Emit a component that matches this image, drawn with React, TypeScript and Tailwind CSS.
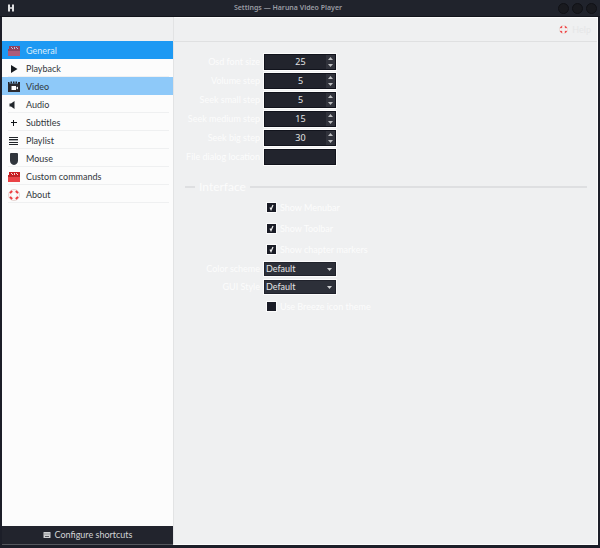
import { useState } from "react";
import type { ReactNode } from "react";

function ToolboxIcon() {
  return (
    <svg className="h-3 w-3" viewBox="0 0 12 12" shapeRendering="crispEdges">
      <path d="M1 1h11v5H0V4h1z" fill="#c91c20" />
      <path d="M0 5h12v6H0z" fill="#ea4346" />
      <path d="M0 5h12v1H0z" fill="#b5282c" />
      <path d="M3 2h1v1H3zM4 3h1v1H4zM6 2h1v2H6zM8 2h1v1H8zM9 3h1v1H9z" fill="#f4d9d9" />
    </svg>
  );
}

function LifebuoyMark() {
  return (
    <g>
      <circle cx="6" cy="6" r="4.300" fill="none" stroke="#fdf8f7" strokeWidth="2.600" />
      <circle cx="6" cy="6" r="5.500" fill="none" stroke="#dfc9c5" strokeWidth="0.800" />
      <circle cx="6" cy="6" r="2.900" fill="none" stroke="#e9d9d6" strokeWidth="0.500" />
      <path
        d="M1.300 3.400 3.400 1.300 4.800 2.400 3.800 3.800 2.400 4.800zM8.600 1.300 10.700 3.400 9.600 4.800 8.200 3.800 7.200 2.400zM1.300 8.600 2.400 7.200 3.800 8.200 4.800 9.600 3.400 10.700zM10.700 8.600 8.600 10.700 7.200 9.600 8.200 8.200 9.600 7.200z"
        fill="#ec3b3e"
      />
    </g>
  );
}

function HelpIcon() {
  return (
    <svg className="h-3 w-3" viewBox="0 0 12 12">
      <LifebuoyMark />
    </svg>
  );
}

function PlayIcon() {
  return (
    <svg className="h-3 w-3" viewBox="0 0 12 12">
      <path d="M3 2v8L9.500 6z" fill="#15191e" />
    </svg>
  );
}

function VideoIcon() {
  return (
    <svg className="h-3 w-3" viewBox="0 0 12 12">
      <path d="M0 2.500h12V11H0z" fill="#2b2b30" />
      <path d="M0 1h1.500v2H0zM2.500 0.500H4v2H2.500zM5 0.500h1.500v2H5zM7.500 0.500H9v2H7.500zM10 1h2v2h-2z" fill="#232329" />
      <path d="M3.500 5H8v4H3.500zM8 7l2-1.500v3z" fill="#fff" />
    </svg>
  );
}

function AudioIcon() {
  return (
    <svg className="h-3 w-3" viewBox="0 0 12 12">
      <path d="M1.500 4.500H3L6.500 2v8L3 7.500H1.500z" fill="#20252b" />
    </svg>
  );
}

function PlusIcon() {
  return (
    <svg className="h-3 w-3" viewBox="0 0 12 12" shapeRendering="crispEdges">
      <path d="M5 3h1v2h3v1H6v3H5V6H3V5h2z" fill="#101318" />
    </svg>
  );
}

function ListIcon() {
  return (
    <svg className="h-3 w-3" viewBox="0 0 12 12" shapeRendering="crispEdges">
      <path d="M1 2h9v1H1zM1 4h9v1H1zM1 7h9v1H1zM1 9h9v1H1z" fill="#22262b" />
      <path d="M1 5h9v1H1z" fill="#a5a7aa" />
    </svg>
  );
}

function MouseIcon() {
  return (
    <svg className="h-3 w-3" viewBox="0 0 12 12">
      <path d="M2.500 0h7L10 1v6.500C10 10 8.500 11.500 6 12 3.500 11.500 2 10 2 7.500V1z" fill="#30353c" />
    </svg>
  );
}

function KeyboardIcon() {
  return (
    <svg className="h-2 w-2" viewBox="0 0 8 8">
      <rect x="0.500" y="1" width="7" height="6" rx="0.500" fill="#cfd0d2" />
      <path d="M1.500 2.500h1v1h-1zM3.500 2.500h1v1h-1zM5.500 2.500h1v1h-1zM2 5h4v1H2z" fill="#55575d" />
    </svg>
  );
}

const pages: { name: string; icon: ReactNode }[] = [
  { name: "General", icon: <ToolboxIcon /> },
  { name: "Playback", icon: <PlayIcon /> },
  { name: "Video", icon: <VideoIcon /> },
  { name: "Audio", icon: <AudioIcon /> },
  { name: "Subtitles", icon: <PlusIcon /> },
  { name: "Playlist", icon: <ListIcon /> },
  { name: "Mouse", icon: <MouseIcon /> },
  { name: "Custom commands", icon: <ToolboxIcon /> },
  { name: "About", icon: <HelpIcon /> },
];

function rowStyle(index: number) {
  if (index === 0) return "bg-[#1d99f3] text-[#d9ecfb]";
  if (index === 2) return "bg-[#8ec9f9] text-[#31363b]";
  return "bg-[#fcfcfc] text-[#31363b]";
}

function Sidebar() {
  return (
    <aside className="flex w-[171px] shrink-0 flex-col bg-[#fcfcfc]">
      <div className="h-6 bg-[#eff0f1]" />
      <nav className="flex-1">
        {pages.map((page, index) => (
          <button key={page.name} type="button" className={"flex h-[18px] w-full pl-1.5 pr-1 text-left " + rowStyle(index)}>
            <span
              className={
                "flex h-full flex-1 items-center gap-1.5 border-b pt-0.5 " +
                (index === 0 || index === 2 ? "border-transparent" : "border-[#eff0f1]")
              }
            >
              <span className={index === 0 ? "opacity-70" : ""}>{page.icon}</span>
              {page.name}
            </span>
          </button>
        ))}
      </nav>
      <button
        type="button"
        className="flex h-[19px] items-center justify-center gap-1 border-b border-[#55575d] bg-[#22242d] text-[#d3d4d6]"
      >
        <KeyboardIcon />
        Configure shortcuts
      </button>
    </aside>
  );
}

function SpinRow({ id, label, initial }: { id: string; label: string; initial: string }) {
  const [value, setValue] = useState(initial);
  const step = (amount: number) => setValue(String(Number(value) + amount));
  return (
    <div className="flex h-[19px] items-center gap-1">
      <label htmlFor={id} className="w-[86px] whitespace-nowrap text-right">
        {label}
      </label>
      <div className="flex h-4 w-[72px] border border-[#11131c] bg-[#22242d] outline outline-[#fcfcfc]">
        <input
          id={id}
          value={value}
          onChange={(event) => setValue(event.target.value)}
          className="w-[61px] bg-transparent pl-2.5 text-center font-['Noto_Sans',sans-serif] text-[#e4e5e6] outline-none"
        />
        <div className="flex w-[9px] flex-col bg-[#30323b]">
          <button type="button" aria-label={"Increase " + label} onClick={() => step(1)} className="flex flex-1 items-center justify-center">
            <svg className="h-[3px] w-[5px]" viewBox="0 0 5 3">
              <path d="M0 3 2.500 0 5 3z" fill="#bdbec1" />
            </svg>
          </button>
          <button type="button" aria-label={"Decrease " + label} onClick={() => step(-1)} className="flex flex-1 items-center justify-center">
            <svg className="h-[3px] w-[5px]" viewBox="0 0 5 3">
              <path d="M0 0h5L2.500 3z" fill="#bdbec1" />
            </svg>
          </button>
        </div>
      </div>
    </div>
  );
}

function CheckRow({ id, label, on }: { id: string; label: string; on: boolean }) {
  return (
    <div className="flex h-[21px] items-center gap-1 pl-[93px]">
      <span className="grid h-[9px] w-[9px] shrink-0">
        <input
          id={id}
          type="checkbox"
          defaultChecked={on}
          className="peer col-start-1 row-start-1 h-[9px] w-[9px] appearance-none bg-[#1a1c26] outline outline-[#fcfcfc]"
        />
        <svg className="pointer-events-none invisible col-start-1 row-start-1 h-[9px] w-[9px] peer-checked:visible" viewBox="0 0 9 9">
          <path d="M3 4.500 4 6.500 6 2" fill="none" stroke="#eceded" strokeWidth="1.200" />
        </svg>
      </span>
      <label htmlFor={id}>{label}</label>
    </div>
  );
}

function SelectRow({ id, label }: { id: string; label: string }) {
  return (
    <div className="flex h-[18px] items-center gap-1">
      <label htmlFor={id} className="w-[86px] whitespace-nowrap text-right">
        {label}
      </label>
      <div className="grid h-[14px] w-[72px] items-center outline outline-[#fcfcfc]">
        <select
          id={id}
          className="col-start-1 row-start-1 h-[14px] w-full appearance-none border border-[#20222b] bg-[#2d3039] pl-px leading-3 text-[#e4e5e6]"
        >
          <option>Default</option>
        </select>
        <svg className="pointer-events-none col-start-1 row-start-1 mr-1 h-[3px] w-[5px] justify-self-end" viewBox="0 0 5 3">
          <path d="M0 0h5L2.500 3z" fill="#d0d1d3" />
        </svg>
      </div>
    </div>
  );
}

export default function App() {
  return (
    <div className="flex h-screen flex-col bg-[#1c1e28] font-['Lato','Noto_Sans',sans-serif] text-[9px] leading-3">
      <header className="grid h-[17px] shrink-0 grid-cols-[24px_1fr_48px] items-center border-b border-[#12141b] bg-[#20232c]">
        <svg className="ml-2 h-2 w-2" viewBox="0 0 8 8" role="img" aria-label="Haruna">
          <path d="M0 0.500h2v2.700h2V0.500h2v7H4V4.800H2v2.700H0z" fill="#dfe0e2" />
        </svg>
        <h1 className="truncate text-center font-['Noto_Sans',sans-serif] text-[7px] font-semibold text-[#9a9da4]">
          Settings — Haruna Video Player
        </h1>
        <div className="flex justify-end gap-[3px] pr-[3px]">
          <button type="button" aria-label="Minimize" className="h-[11px] w-[11px] rounded-full border border-[#101116] bg-[#191a1f]" />
          <button type="button" aria-label="Maximize" className="h-[11px] w-[11px] rounded-full border border-[#101116] bg-[#191a1f]" />
          <button type="button" aria-label="Close" className="h-[11px] w-[11px] rounded-full border border-[#101116] bg-[#191a1f]" />
        </div>
      </header>

      <div className="mx-0.5 mb-[3px] flex min-h-0 flex-1">
        <Sidebar />
        <main className="flex min-w-0 flex-1 flex-col border-b border-l border-r border-b-[#fcfcfc] border-l-[#e2e3e4] border-r-[#fcfcfc] bg-[#eff0f1] text-[#fcfcfc]">
          <div className="flex h-[25px] shrink-0 items-center justify-end border-b border-t border-b-[#dfe0e1] border-t-[#fcfcfc] pr-1.5">
            <button type="button" className="flex items-center gap-1 text-[#e5e6e7]">
              <svg className="h-[9px] w-[9px]" viewBox="0 0 12 12">
                <LifebuoyMark />
              </svg>
              Help
            </button>
          </div>

          <form className="flex flex-col pr-2.5 pt-2.5">
            <SpinRow id="osd" label="Osd font size" initial="25" />
            <SpinRow id="volume" label="Volume step" initial="5" />
            <SpinRow id="small" label="Seek small step" initial="5" />
            <SpinRow id="medium" label="Seek medium step" initial="15" />
            <SpinRow id="big" label="Seek big step" initial="30" />
            <div className="flex h-5 items-center gap-1">
              <label htmlFor="location" className="w-[86px] whitespace-nowrap text-right">
                File dialog location
              </label>
              <input id="location" className="h-4 w-[72px] border border-[#11131c] bg-[#22242d] px-1 text-[#e4e5e6] outline outline-[#fcfcfc]" />
            </div>

            <div className="mt-1 flex h-8 items-center gap-1 pl-[11px]">
              <span className="h-0.5 w-2.5 bg-[#dedfe1]" />
              <h2 className="text-xs">Interface</h2>
              <span className="h-0.5 flex-1 bg-[#dedfe1]" />
            </div>

            <div className="-mt-1.5 flex flex-col">
              <CheckRow id="menubar" label="Show Menubar" on />
              <CheckRow id="toolbar" label="Show Toolbar" on />
              <CheckRow id="chapters" label="Show chapter markers" on />
            </div>
            <SelectRow id="scheme" label="Color scheme" />
            <SelectRow id="style" label="GUI Style" />
            <CheckRow id="breeze" label="Use Breeze icon theme" on={false} />
          </form>
        </main>
      </div>
    </div>
  );
}
